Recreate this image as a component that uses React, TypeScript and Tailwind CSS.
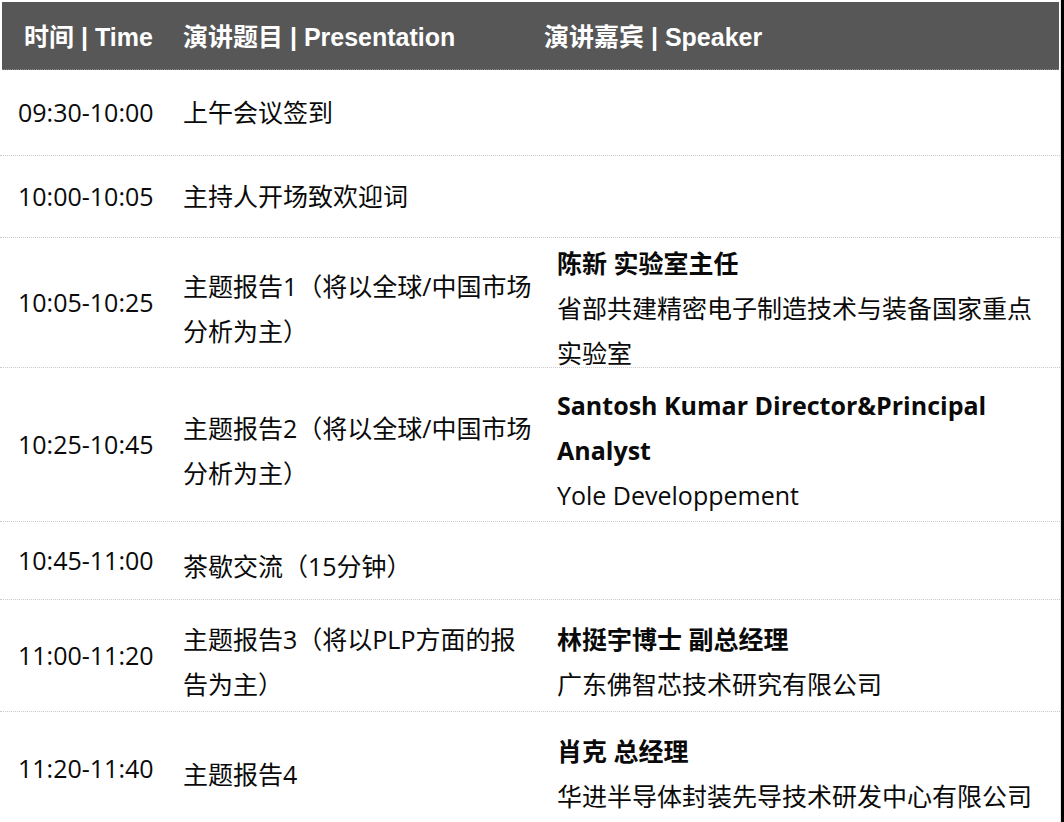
type Row = {
  time: string
  title: string
  name?: string
  org?: string
  h: string
  shift?: boolean
  last?: boolean
}

const rows: Row[] = [
  { time: "09:30-10:00", title: "上午会议签到", h: "h-[86px]" },
  { time: "10:00-10:05", title: "主持人开场致欢迎词", h: "h-[82px]" },
  {
    time: "10:05-10:25",
    title: "主题报告1（将以全球/中国市场分析为主）",
    name: "陈新 实验室主任",
    org: "省部共建精密电子制造技术与装备国家重点实验室",
    h: "h-[130px]",
    shift: true
  },
  {
    time: "10:25-10:45",
    title: "主题报告2（将以全球/中国市场分析为主）",
    name: "Santosh Kumar Director&Principal Analyst",
    org: "Yole Developpement",
    h: "h-[154px]",
    shift: true
  },
  { time: "10:45-11:00", title: "茶歇交流（15分钟）", h: "h-[78px]", shift: true },
  {
    time: "11:00-11:20",
    title: "主题报告3（将以PLP方面的报告为主）",
    name: "林挺宇博士 副总经理",
    org: "广东佛智芯技术研究有限公司",
    h: "h-[112px]",
    shift: true
  },
  {
    time: "11:20-11:40",
    title: "主题报告4",
    name: "肖克 总经理",
    org: "华进半导体封装先导技术研发中心有限公司",
    h: "h-[112px]",
    shift: true,
    last: true
  }
]

export default function App() {
  return (
    <div className="flex w-[1064px] h-[822px] overflow-hidden bg-white">
      <div className="w-[1061px] shrink-0 border-r border-[#e4e4e4] font-['Open_Sans','Noto_Sans_CJK_SC',sans-serif] text-[25px] leading-[45px] text-[#0a0a0a]">

        {/* HEADER */}
        <div className="mt-[2px] ml-[2px] mr-[1px] h-[68px] bg-[#575757] flex items-center pt-[4px] text-white font-bold text-[25px] font-['Liberation_Sans','Noto_Sans_CJK_SC',sans-serif] border-b border-dotted border-[#8a8a8a]">
          <div className="w-[181px] shrink-0 pl-[22px]">时间 | Time</div>
          <div className="w-[361px] shrink-0">演讲题目 | Presentation</div>
          <div>演讲嘉宾 | Speaker</div>
        </div>

        {/* ROWS */}
        {rows.map((r) => (
          <div
            key={r.time}
            className={`flex ${r.h} ${r.last ? "" : "border-b border-dotted border-[#c9c9c9]"}`}
          >
            <div className="w-[183px] shrink-0 pl-[18px] flex items-center whitespace-nowrap">
              {r.time}
            </div>
            <div className={`w-[374px] shrink-0 pr-[18px] flex items-center ${r.shift ? "pt-[12px]" : ""}`}>
              <div>{r.title}</div>
            </div>
            <div className={`flex-1 min-w-0 pr-[10px] flex items-center ${r.shift ? "pt-[12px]" : ""}`}>
              {r.name && (
                <div>
                  <div className="font-bold">{r.name}</div>
                  <div>{r.org}</div>
                </div>
              )}
            </div>
          </div>
        ))}
      </div>
      <div className="w-[3px] shrink-0 bg-black"></div>
    </div>
  )
}
